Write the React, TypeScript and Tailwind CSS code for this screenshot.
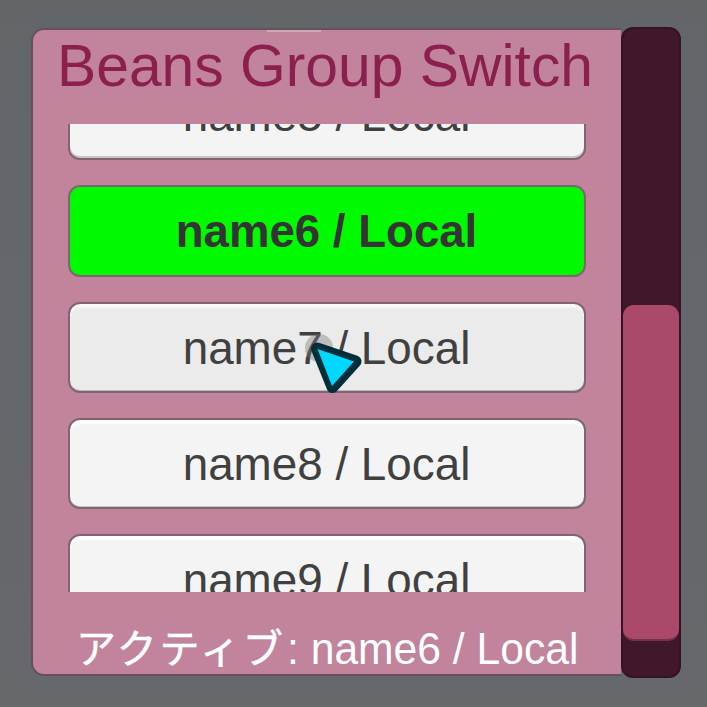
const rows = [
  { name: "name5", top: "h-[91px]", look: "bg-[#f4f4f4] shadow-[inset_0_4px_1px_#fff,inset_0_-2px_0_#c9c7c9]", text: "" },
  { name: "name6", top: "h-[92px]", look: "bg-[#00fa00]", text: "font-bold text-[45.6px]" },
  { name: "name7", top: "h-[91px]", look: "bg-[#ebebeb] shadow-[inset_0_4px_1px_#f8f8f8,inset_0_-1px_0_#bbb9bb]", text: "" },
  { name: "name8", top: "h-[91px]", look: "bg-[#f4f4f4] shadow-[inset_0_4px_1px_#fff,inset_0_-1px_0_#c9c7c9]", text: "" },
  { name: "name9", top: "h-[91px]", look: "bg-[#f4f4f4] shadow-[inset_0_4px_1px_#fff,inset_0_-1px_0_#c9c7c9]", text: "" },
];

export default function App() {
  return (
    <div className="relative h-[707px] w-[707px] overflow-hidden bg-linear-to-b from-[#626669] via-[#64676b] to-[#67686b] pt-[27px] pl-[31px] font-['Liberation_Sans',Arial,'Noto_Sans_CJK_JP',sans-serif]">
      <div className="flex">
        <main className="relative mt-px flex h-[648px] w-[590px] flex-col rounded-l-[13px] border-2 border-r-0 border-[#66505d] bg-[#c1849c]">
          <div className="absolute top-0 left-[234px] h-[2px] w-[54px] bg-[#cda9b4]" />
          <h1 className="h-[94px] pl-[24px] text-[58.8px] leading-[71px] whitespace-nowrap text-[#8b204e]">
            Beans Group Switch
          </h1>
          <div className="ml-[35px] flex h-[468px] w-[518px] flex-col justify-start overflow-hidden">
            <div className="-mt-[55px] flex flex-col gap-[25px]">
              {rows.map((row) => (
                <div
                  key={row.name}
                  className={`flex shrink-0 items-center justify-center rounded-[12px] border-2 border-[#806570] pt-[2px] pr-px leading-none whitespace-nowrap ${row.top} ${row.look} ${row.text || "text-[45.8px]"}`}
                >
                  <span className={row.text ? "text-[#343434]" : "text-[#404040]"}>{row.name} / Local</span>
                </div>
              ))}
            </div>
          </div>
          <footer className="flex h-[82px] pt-[31px] pl-[43px] leading-[52px] whitespace-nowrap text-white">
            <span lang="ja" className="w-[211px] text-[40px] tracking-[2.8px] [-webkit-text-stroke:0.5px_white]">アクティブ</span>
            <span className="origin-left scale-x-[.947] text-[45px]">: name6 / Local</span>
          </footer>
        </main>
        <aside className="flex h-[651px] w-[60px] flex-col rounded-[12px] border-2 border-[#341324] bg-[#40172b] pt-[276px]">
          <div className="h-[336px] rounded-[11px] border-b-2 border-[#75304c] bg-[#aa4969]" />
        </aside>
      </div>
      <svg className="absolute top-[325px] left-[295px]" width="75" height="75" viewBox="295 325 75 75">
        <circle cx="319" cy="348" r="14" fill="#777" opacity=".4" />
        <path d="M317 348.500L355.500 361.500L332.500 387Z" fill="#002f3a" stroke="#002f3a" strokeWidth="12" strokeLinejoin="round" />
        <path d="M317.500 349L354 361.500L332 386Z" fill="#00d7ff" />
      </svg>
    </div>
  );
}
